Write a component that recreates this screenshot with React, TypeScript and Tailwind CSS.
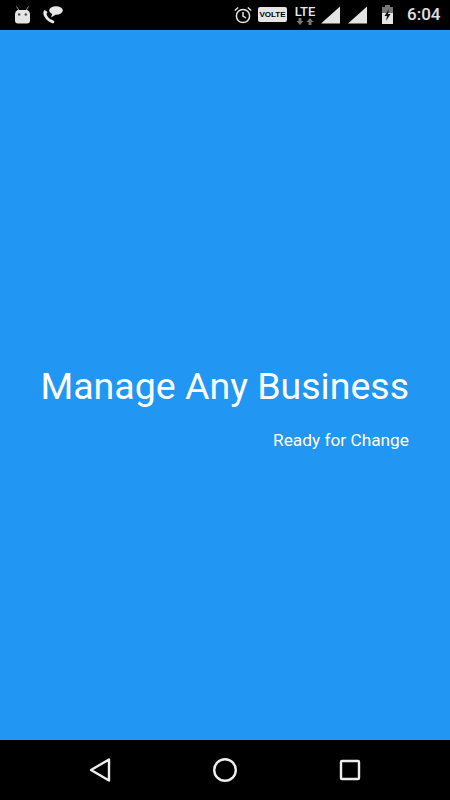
export default function App() {
  return (
    <div className="w-[450px] h-[800px] flex flex-col bg-[#2196f3] font-['Roboto',sans-serif] text-white overflow-hidden">
      {/* Status bar */}
      <div className="h-[30px] bg-black flex items-center pl-[15px] pr-[11px] pb-[1px]">
        <svg width="15" height="18" viewBox="0 0 15 18" fill="#e4e4e4">
          <path d="M1.5 0.5 L4 4.5 M13.5 0.5 L11 4.5" stroke="#999" strokeWidth="1" />
          <path d="M2.5 4 H12.5 Q15 5.5 15 8 V14.5 Q15 17.5 12 17.5 H3 Q0 17.5 0 14.5 V8 Q0 5.5 2.5 4 Z" />
          <circle cx="4.2" cy="8.5" r="1.3" fill="#555" />
          <circle cx="10.8" cy="8.5" r="1.3" fill="#555" />
        </svg>
        <svg className="ml-[13px]" width="20" height="18" viewBox="0 0 20 18" fill="#e8e8e8">
          <ellipse cx="13" cy="4.5" rx="6.8" ry="4.2" />
          <path d="M9.5 7.5 L8 11.5 L13 8.5 Z" />
          <path d="M1.5 4 Q-0.5 6 1 10 Q4 15.5 10 17.5 Q11 17.5 11.5 15.5 L9.5 14 Q5 13 3.5 8 L4.5 6 Z" />
        </svg>

        <div className="ml-auto flex items-center">
          <svg width="18" height="18" viewBox="0 0 18 18" fill="none" stroke="#e4e4e4" strokeWidth="1.5">
            <circle cx="9" cy="10" r="6.6" />
            <path d="M9 6 V10 L12 12" />
            <path d="M0.8 4.5 L4.2 1.5 M17.2 4.5 L13.8 1.5" />
          </svg>
          <div className="ml-[6px] w-[29px] h-[15px] rounded-[2px] bg-[#e4e4e4] text-black text-[8px] font-bold leading-[15px] text-center font-['Liberation_Sans',sans-serif]">
            VOLTE
          </div>
          <div className="ml-[7px] w-[22px] flex flex-col items-center">
            <span className="text-[13px] font-medium leading-[13px] text-[#e8e8e8]">LTE</span>
            <svg width="18" height="7" viewBox="0 0 18 7" fill="#777">
              <path d="M4 7 L0.5 3 H2.5 V0 H5.5 V3 H7.5 Z" />
              <path d="M14 0 L10.5 4 H12.5 V7 H15.5 V4 H17.5 Z" />
            </svg>
          </div>
          <svg className="ml-[5px]" width="19" height="18" viewBox="0 0 19 18" fill="#e4e4e4">
            <path d="M0 17.5 L19 0.5 V17.5 Z" />
          </svg>
          <svg className="ml-[8px]" width="19" height="18" viewBox="0 0 19 18" fill="#e4e4e4">
            <path d="M0 17.5 L19 0.5 V17.5 Z" />
          </svg>
          <svg className="ml-[15px]" width="11" height="19" viewBox="0 0 11 19">
            <path d="M3 0 H8 V2 H11 V19 H0 V2 H3 Z" fill="#777" />
            <path d="M0 8 H11 V19 H0 Z" fill="#e4e4e4" />
            <path d="M7 4 L2.5 11 H5 L4 16 L8.5 9 H6 Z" fill="#111" />
          </svg>
          <span className="ml-[14px] w-[32px] text-[17px] font-medium leading-none text-[#e0e0e0] whitespace-nowrap">6:04</span>
        </div>
      </div>

      {/* Splash content */}
      <div className="flex-1 flex flex-col items-end justify-center pr-[41px] pt-[45px]">
        <h1 className="text-[37.5px] font-normal leading-[42px] whitespace-nowrap">Manage Any Business</h1>
        <p className="mt-[22px] text-[17.3px] leading-[22px] whitespace-nowrap">Ready for Change</p>
      </div>

      {/* Navigation bar */}
      <div className="h-[60px] bg-black flex items-center justify-between px-[88px]">
        <svg width="24" height="26" viewBox="0 0 24 26" fill="none" stroke="#eeeeee" strokeWidth="2.4" strokeLinejoin="round">
          <path d="M21 2.5 V23.5 L3 13 Z" />
        </svg>
        <svg width="26" height="26" viewBox="0 0 26 26" fill="none" stroke="#eeeeee" strokeWidth="2.4">
          <circle cx="13" cy="13" r="10.8" />
        </svg>
        <svg width="24" height="24" viewBox="0 0 24 24" fill="none" stroke="#eeeeee" strokeWidth="2.4" strokeLinejoin="round">
          <rect x="3" y="3" width="18" height="18" rx="1" />
        </svg>
      </div>
    </div>
  )
}
